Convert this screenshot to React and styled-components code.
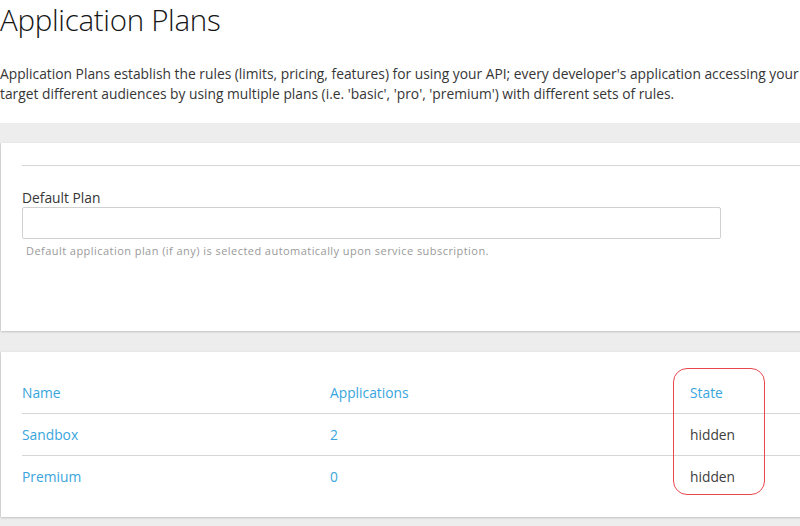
import React from "react";
import styled, { createGlobalStyle } from "styled-components";

const Global = createGlobalStyle`
  html, body { margin: 0; padding: 0; background: #fff; overflow: hidden; }
  body { font-family: "Open Sans", "Noto Sans", sans-serif; color: #363636; }
`;

const Page = styled.div`
  width: 1000px;
  height: 526px;
  overflow: hidden;
  background: #ededed;
`;

const Header = styled.header`
  background: #fff;
  padding: 2px 0 19px 0;
`;

const Title = styled.h1`
  margin: 0;
  font-size: 29.5px;
  font-weight: 300;
  line-height: 36px;
  color: #151515;
  letter-spacing: -0.3px;
`;

const Intro = styled.p`
  margin: 26px 0 0 0;
  font-size: 13.8px;
  line-height: 20px;
  white-space: nowrap;
  color: #363636;
`;

const Area = styled.main`
  padding: 20px 0 0 1px;
  display: flex;
  flex-direction: column;
  gap: 21px;
`;

const Card = styled.section`
  position: relative;
  background: #fff;
  box-shadow: 0 1px 2px rgba(0, 0, 0, 0.18), -1px 0 1px rgba(0, 0, 0, 0.06);
  padding: ${(p) => p.$pad};
  height: ${(p) => p.$h};
  box-sizing: border-box;
`;

const Divider = styled.hr`
  margin: 0;
  border: 0;
  border-top: 1px solid #d6d6d6;
`;

const Field = styled.div`
  margin-top: 23px;
  display: flex;
  flex-direction: column;
`;

const Label = styled.label`
  font-size: 13.8px;
  line-height: 18px;
  color: #363636;
`;

const Input = styled.div`
  margin-top: 0;
  width: 699px;
  height: 32px;
  box-sizing: border-box;
  border: 1px solid #d1d1d1;
  border-radius: 2px;
  background: #fff;
`;

const Help = styled.div`
  margin: 5px 0 0 4px;
  font-size: 11px;
  letter-spacing: 0.45px;
  line-height: 14px;
  color: #9a9a9a;
`;

const Table = styled.table`
  width: 100%;
  border-collapse: collapse;
  font-size: 13.8px;
`;

const Th = styled.th`
  text-align: left;
  font-weight: 400;
  color: #39a5dc;
  height: 41px;
  padding: 0;
  width: ${(p) => p.$w || "auto"};
  border-bottom: 1px solid #d6d6d6;
`;

const Td = styled.td`
  padding: 0;
  height: 41px;
  color: ${(p) => (p.$link ? "#39a5dc" : "#404040")};
  border-bottom: ${(p) => (p.$last ? "0" : "1px solid #d6d6d6")};
`;

const Highlight = styled.div`
  position: absolute;
  left: 672px;
  top: 16px;
  width: 92px;
  height: 127px;
  box-sizing: border-box;
  border: 1.5px solid #e8474f;
  border-radius: 14px;
  pointer-events: none;
`;

const rows = [
  { name: "Sandbox", apps: "2", state: "hidden" },
  { name: "Premium", apps: "0", state: "hidden" },
];

export default function App() {
  return (
    <>
      <Global />
      <Page>
        <Header>
          <Title>Application Plans</Title>
          <Intro>
            Application Plans establish the rules (limits, pricing, features) for using your API; every developer's application accessing your API will be accessing it within the constraints of an Application Plan. From a business perspective, Application Plans allow you to
            <br />
            target different audiences by using multiple plans (i.e. 'basic', 'pro', 'premium') with different sets of rules.
          </Intro>
        </Header>
        <Area>
          <Card $pad="22px 0 0 21px" $h="188px">
            <Divider />
            <Field>
              <Label>Default Plan</Label>
              <Input />
              <Help>Default application plan (if any) is selected automatically upon service subscription.</Help>
            </Field>
          </Card>
          <Card $pad="20px 0 0 21px" $h="165px">
            <Table>
              <thead>
                <tr>
                  <Th $w="308px">Name</Th>
                  <Th $w="360px">Applications</Th>
                  <Th>State</Th>
                </tr>
              </thead>
              <tbody>
                {rows.map((r, i) => (
                  <tr key={r.name}>
                    <Td $link $last={i === rows.length - 1}>{r.name}</Td>
                    <Td $link $last={i === rows.length - 1}>{r.apps}</Td>
                    <Td $last={i === rows.length - 1}>{r.state}</Td>
                  </tr>
                ))}
              </tbody>
            </Table>
            <Highlight />
          </Card>
        </Area>
      </Page>
    </>
  );
}
